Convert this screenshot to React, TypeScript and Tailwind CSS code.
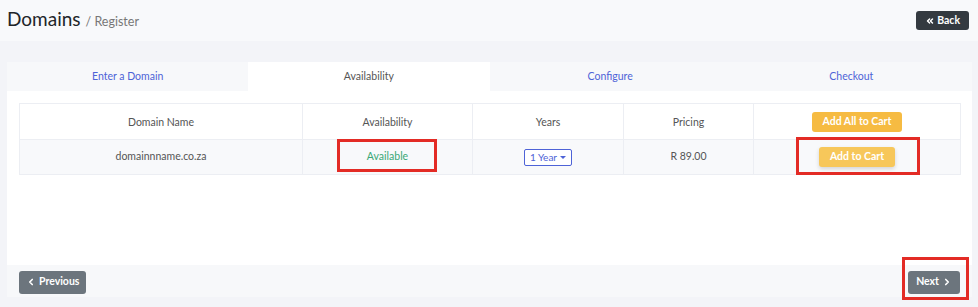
import { ChevronLeft, ChevronRight, ChevronsLeft } from 'lucide-react'

const font = { fontFamily: 'Lato, "Noto Sans", sans-serif' }

export default function App() {
  const tabs = [
    { label: 'Enter a Domain', active: false },
    { label: 'Availability', active: true },
    { label: 'Configure', active: false },
    { label: 'Checkout', active: false },
  ]

  return (
    <div className="w-[978px] h-[307px] bg-[#f3f4f8] relative overflow-hidden" style={font}>
      {/* Header */}
      <div className="h-[41px] bg-[#f8f9fb] flex items-center justify-between pl-[7px] pr-[9px]">
        <div className="flex items-baseline gap-[5px]">
          <h1 className="text-[19px] text-[#212529] leading-none">Domains</h1>
          <span className="text-[12.5px] text-[#777]">/ Register</span>
        </div>
        <button className="h-[19px] px-[9px] rounded-[3px] bg-[#343a40] text-white text-[10.5px] font-bold flex items-center gap-[2px]">
          <ChevronsLeft size={10} strokeWidth={3.5} />
          Back
        </button>
      </div>

      {/* Card */}
      <div className="mt-[21px] ml-[7px] w-[965px] bg-white">
        <div className="grid grid-cols-4 h-[29px]">
          {tabs.map((t) => (
            <div
              key={t.label}
              className={`flex items-center justify-center pt-[1px] text-[10.5px] ${
                t.active ? 'bg-white text-[#555]' : 'bg-[#f7f8fa] text-[#4e63d7]'
              }`}
            >
              {t.label}
            </div>
          ))}
        </div>

        <div className="px-[12px] pt-[12px] h-[174px]">
          <table className="w-[942px] border-collapse text-[10.5px] text-[#555]">
            <thead>
              <tr className="h-[36px]">
                <th className="w-[283px] border border-[#eceef3] font-normal pt-[2px]">Domain Name</th>
                <th className="w-[170px] border border-[#eceef3] font-normal pt-[2px]">Availability</th>
                <th className="w-[151px] border border-[#eceef3] font-normal pt-[2px]">Years</th>
                <th className="w-[130px] border border-[#eceef3] font-normal pt-[2px]">Pricing</th>
                <th className="border border-[#eceef3] font-normal">
                  <button className="h-[20px] px-[11px] rounded-[3px] bg-[#f6bb42] text-white text-[10.5px] font-bold">
                    Add All to Cart
                  </button>
                </th>
              </tr>
            </thead>
            <tbody>
              <tr className="h-[35px] bg-[#f8f9fb]">
                <td className="border border-[#eceef3] text-center">domainnname.co.za</td>
                <td className="border border-[#eceef3] text-center text-[#3aa876]">Available</td>
                <td className="border border-[#eceef3] text-center">
                  <span className="inline-flex items-center gap-[3px] h-[17px] px-[5px] border border-[#4e63d7] rounded-[2px] text-[#4e63d7] text-[10px] bg-white">
                    1 Year
                    <span className="w-0 h-0 border-l-[3px] border-r-[3px] border-t-[3px] border-l-transparent border-r-transparent border-t-[#4e63d7]" />
                  </span>
                </td>
                <td className="border border-[#eceef3] text-center">R 89.00</td>
                <td className="border border-[#eceef3] text-center">
                  <button className="h-[20px] px-[11px] rounded-[3px] bg-[#f7c75a] text-white text-[10.5px] font-bold shadow-[0_2px_4px_rgba(0,0,0,0.15)]">
                    Add to Cart
                  </button>
                </td>
              </tr>
            </tbody>
          </table>
        </div>

        {/* Footer */}
        <div className="h-[32px] bg-[#f7f8fa] flex items-center justify-between pl-[12px] pr-[12px] pt-[2px]">
          <button className="h-[23px] px-[7px] rounded-[3px] bg-[#6c757d] text-white text-[10.5px] font-bold flex items-center gap-[3px]">
            <ChevronLeft size={10} strokeWidth={4} />
            Previous
          </button>
          <button className="h-[23px] px-[8px] rounded-[3px] bg-[#6c757d] text-white text-[10.5px] font-bold flex items-center gap-[3px]">
            Next
            <ChevronRight size={10} strokeWidth={4} />
          </button>
        </div>
      </div>

      {/* Annotation boxes */}
      <div className="absolute left-[337px] top-[139px] w-[100px] h-[33px] border-[3px] border-[#e32b25]" />
      <div className="absolute left-[796px] top-[137px] w-[124px] h-[38px] border-[3px] border-[#e32b25]" />
      <div className="absolute left-[902px] top-[257px] w-[67px] h-[43px] border-[3px] border-[#e32b25]" />
    </div>
  )
}
